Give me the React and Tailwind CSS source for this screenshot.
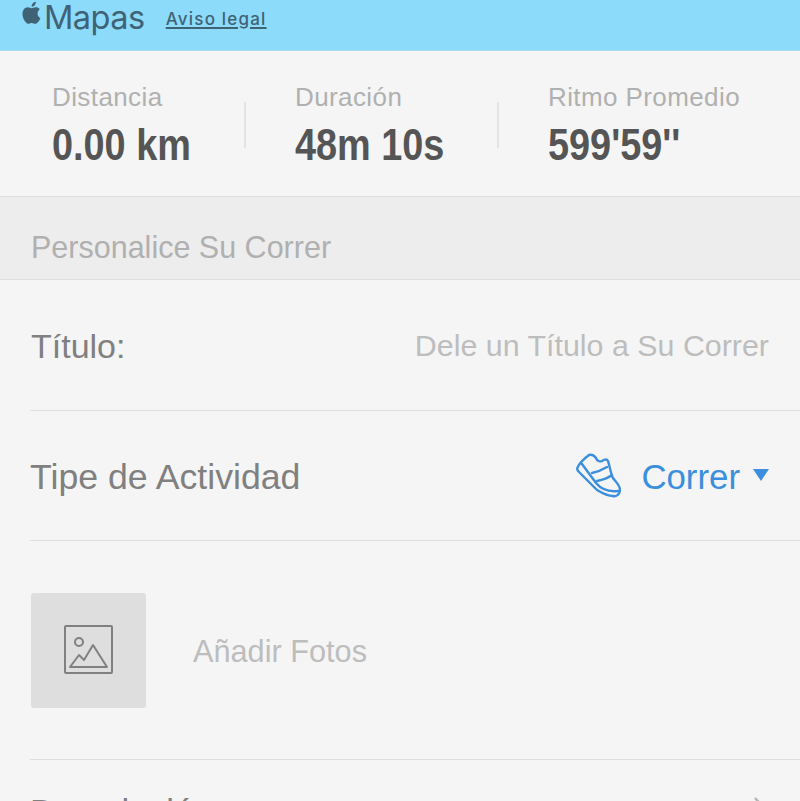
const font = { fontFamily: '"Liberation Sans", Arial, sans-serif' }

function Stat({ label, value, className }) {
  return (
    <div className={className}>
      <div className="text-[26px] leading-[30px] text-[#b0b0b0] tracking-[0.4px] whitespace-nowrap">{label}</div>
      <div className="mt-[8px] text-[44px] leading-[50px] font-bold text-[#555555] whitespace-nowrap origin-left scale-x-[0.86]">{value}</div>
    </div>
  )
}

function Shoe() {
  return (
    <svg width="46" height="46" viewBox="0 0 46 46" fill="none" stroke="#3b8fdc" strokeWidth="2.4" strokeLinecap="round" strokeLinejoin="round">
      <path d="M2.3 15 C4 11 10 5 14 2 C17 1 19 2 21 5 C22 8 25 9 27 8 C30 6 32 6 33 8 C35 14 36 22 38 25 C40 28 44 31 45 36 C45 41 42 44 38 43 C32 43 27 40 22 37 L4 19 C3 18 2 16 2.3 15 Z" />
      <path d="M7 11 L21 30 C26 36 34 39 43 38" />
      <path d="M17 20 C22 19 27 17 32 14" />
      <path d="M22 28 C27 27 33 25 37 22" />
    </svg>
  )
}

function PhotoIcon() {
  return (
    <svg width="50" height="50" viewBox="0 0 50 50" fill="none" stroke="#808080" strokeWidth="2" strokeLinejoin="round">
      <rect x="1" y="1" width="47" height="47" rx="1" />
      <circle cx="15" cy="17" r="4" />
      <path d="M6 42 L15 30 L20 35 L29 20 L43 42 Z" />
    </svg>
  )
}

export default function App() {
  return (
    <div className="w-[800px] h-[801px] overflow-hidden bg-[#f5f5f5]" style={font}>
      {/* barra de mapas */}
      <div className="h-[51px] bg-[#8cdbfa] border-b border-[#a6dff5] flex items-start pl-[18px] text-[#3f6275]">
        <svg width="24" height="28" viewBox="0 0 22 26" fill="#3f6275" className="-mt-[1px]">
          <path d="M18 13.5c0-2.6 2.1-3.8 2.2-3.9-1.2-1.8-3.1-2-3.8-2-1.6-.2-3.1.9-3.9.9-.8 0-2-.9-3.4-.9-1.7 0-3.3 1-4.2 2.5-1.8 3.1-.5 7.8 1.3 10.3.9 1.2 1.9 2.6 3.2 2.6 1.3-.1 1.8-.8 3.3-.8s2 .8 3.4.8 2.3-1.3 3.1-2.5c1-1.4 1.4-2.8 1.4-2.9-.1 0-2.6-1-2.6-4.1zM15.4 5.8c.7-.9 1.2-2 1-3.2-1 0-2.2.7-2.9 1.5-.6.7-1.2 1.9-1 3 1.1.1 2.2-.5 2.9-1.3z" />
        </svg>
        <span className="text-[32.5px] leading-[36px] ml-[2px] font-['Inter',sans-serif] tracking-[-0.5px]">Mapas</span>
        <span className="ml-[21px] mt-[8px] text-[17px] leading-[22px] font-medium tracking-[1.2px] font-['Inter',sans-serif] underline underline-offset-2 decoration-2">Aviso legal</span>
      </div>

      {/* resumen */}
      <div className="h-[146px] flex border-b border-[#dedede] pt-[31px]">
        <Stat label="Distancia" value="0.00 km" className="w-[244px] pl-[52px]" />
        <div className="w-[2px] h-[46px] mt-[20px] bg-[#e3e3e3]" />
        <Stat label="Duración" value="48m 10s" className="w-[251px] pl-[49px]" />
        <div className="w-[2px] h-[46px] mt-[20px] bg-[#e3e3e3]" />
        <Stat label="Ritmo Promedio" value="599'59''" className="flex-1 pl-[49px]" />
      </div>

      <div className="h-[83px] bg-[#ededed] border-b border-[#dedede] pl-[31px] pt-[33px] text-[30.5px] leading-[34px] text-[#b0b0b0]">
        Personalice Su Correr
      </div>

      <div className="pl-[30px]">
        <div className="h-[131px] flex items-center justify-between pr-[31px] border-b border-[#dedede]">
          <span className="pl-[1px] pt-[2px] text-[34px] text-[#808080]">Título:</span>
          <span className="pt-[2px] text-[30.4px] text-[#bdbdbd]">Dele un Título a Su Correr</span>
        </div>
        <div className="h-[130px] flex items-center border-b border-[#dedede] pr-[31px]">
          <span className="pt-[4px] text-[35.7px] text-[#808080]">Tipe de Actividad</span>
          <span className="ml-auto mt-[1px] -translate-x-[1px]"><Shoe /></span>
          <span className="ml-[20px] pt-[4px] -translate-x-[1px] text-[34.8px] text-[#3b8fdc]">Correr</span>
          <span className="ml-[12px] -mt-[2px] w-0 h-0 border-x-[8px] border-x-transparent border-t-[12px] border-t-[#3b8fdc]" />
        </div>
        <div className="h-[219px] flex items-center border-b border-[#dedede]">
          <div className="ml-[1px] w-[115px] h-[115px] bg-[#dedede] rounded-[3px] flex items-center justify-center">
            <PhotoIcon />
          </div>
          <span className="ml-[47px] pt-[4px] text-[30.7px] text-[#bdbdbd]">Añadir Fotos</span>
        </div>
        <div className="pt-[26px] flex justify-between pr-[31px]">
          <span className="text-[35px] text-[#808080]">Descripción</span>
          <svg width="16" height="30" viewBox="0 0 16 30" fill="none" stroke="#b5b5b5" strokeWidth="2.5" className="mt-[10px]">
            <path d="M2 2 L14 15 L2 28" />
          </svg>
        </div>
      </div>
    </div>
  )
}
